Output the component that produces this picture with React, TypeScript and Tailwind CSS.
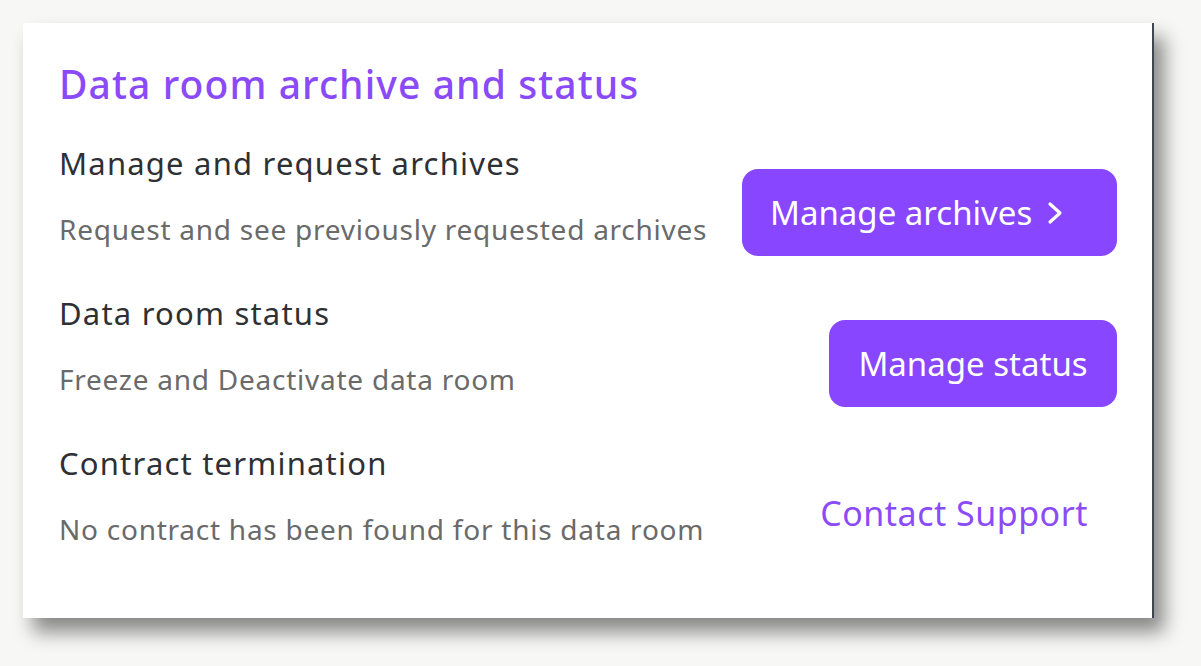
import React from "react";

function Row({ title, desc, action }: { title: string; desc: string; action: React.ReactNode }) {
  return (
    <div className="flex items-start justify-between h-[150px]">
      <div className="flex flex-col">
        <div className="text-[31px] leading-[40px] tracking-[1.2px] text-[#2e3034]">{title}</div>
        <div className="mt-[26px] text-[28px] leading-[40px] tracking-[0.75px] text-[#6a6a6a]">{desc}</div>
      </div>
      {action}
    </div>
  );
}

export default function App() {
  return (
    <div className="w-[1201px] h-[666px] bg-[#f7f7f6] pt-[23px] pl-[23px]" style={{ fontFamily: "'Noto Sans', sans-serif" }}>
      <div className="w-[1131px] h-[595px] bg-white border-r-2 border-[#3f4650] shadow-[10px_14px_18px_rgba(0,0,0,0.45)] pl-[36px] pr-[35px] pt-[36px]">
        <h1 className="text-[39px] leading-[50px] tracking-[1.1px] text-[#8a4af7] font-medium">Data room archive and status</h1>
        <div className="mt-[34px] flex flex-col">
          <Row
            title="Manage and request archives"
            desc="Request and see previously requested archives"
            action={
              <button className="mt-[26px] h-[87px] w-[375px] rounded-[16px] bg-[#8847fe] text-white text-[33px] flex items-center justify-start pl-[28px] gap-[15px]">
                Manage archives
                <svg width="16" height="24" viewBox="0 0 16 24" fill="none" stroke="white" strokeWidth="3.2" strokeLinecap="round" strokeLinejoin="round"><path d="M3 3l10 9-10 9" /></svg>
              </button>
            }
          />
          <Row
            title="Data room status"
            desc="Freeze and Deactivate data room"
            action={
              <button className="mt-[27px] h-[87px] w-[288px] rounded-[16px] bg-[#8847fe] text-white text-[33px] flex items-center justify-center">
                Manage status
              </button>
            }
          />
          <Row
            title="Contract termination"
            desc="No contract has been found for this data room"
            action={<span className="mt-[50px] mr-[29px] text-[34px] leading-[40px] tracking-[0.5px] text-[#8b4cf7]">Contact Support</span>}
          />
        </div>
      </div>
    </div>
  );
}
